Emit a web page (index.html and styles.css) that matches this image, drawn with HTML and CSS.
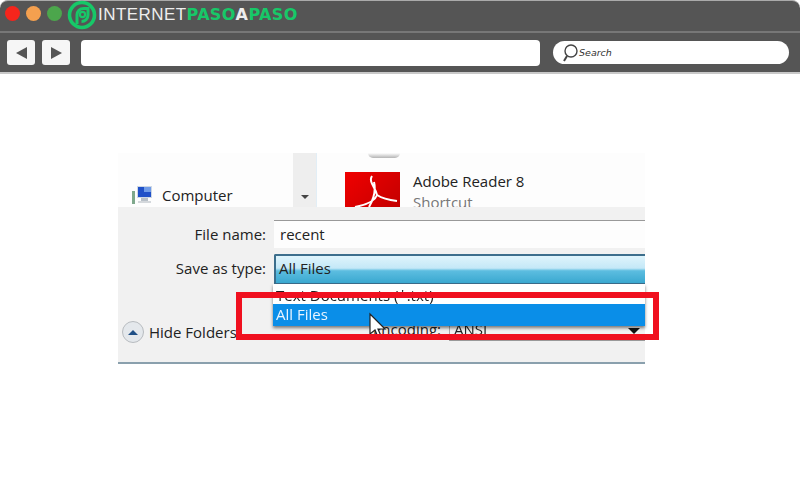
FILE: index.html
```html
<!DOCTYPE html>
<html lang="en">
<head>
  <meta charset="UTF-8">
  <meta name="viewport" content="width=device-width, initial-scale=1.0">
  <title>Internet Paso a Paso</title>
  <link rel="stylesheet" href="styles.css">
</head>
<body>
  <div class="browser">
    <div class="titlebar">
      <span class="light red"></span>
      <span class="light orange"></span>
      <span class="light green"></span>
      <svg class="logo-icon" width="30" height="30" viewBox="0 0 30 30">
        <circle cx="15" cy="15" r="12.5" fill="none" stroke="#17c868" stroke-width="3.6"/>
        <path d="M10 24 L10 15 A6.5 6.5 0 0 1 16.500 8.500 L21 8.500 L21 15 A6.500 6.500 0 0 1 14.500 21.500" fill="none" stroke="#17c868" stroke-width="3"/>
        <circle cx="15.500" cy="14.500" r="2.600" fill="none" stroke="#17c868" stroke-width="2.200"/>
      </svg>
      <div class="logo-text">INTERNET<span class="paso">PASO</span><span class="paso-a">A</span><span class="paso">PASO</span></div>
    </div>
    <div class="toolbar">
      <button class="nav"><span class="arrow-left"></span></button>
      <button class="nav"><span class="arrow-right"></span></button>
      <div class="address"></div>
      <div class="search">
        <svg width="18" height="20" viewBox="0 0 18 20">
          <circle cx="10" cy="8" r="6" fill="none" stroke="#444" stroke-width="1.400"/>
          <path d="M6 13 L3 18" stroke="#444" stroke-width="2"/>
        </svg>
        <span>Search</span>
      </div>
    </div>
  </div>

  <div class="dialog">
    <div class="files">
      <div class="nav-pane">
        <svg class="computer" width="22" height="22" viewBox="0 0 22 22">
          <rect x="1" y="7" width="3" height="13" fill="#7fa88c"/>
          <rect x="6" y="2" width="15" height="12" fill="#cfd8e4"/>
          <rect x="7" y="3" width="13" height="10" fill="#1f50c8"/>
          <rect x="13" y="3" width="7" height="5" fill="#6f9be8"/>
          <rect x="10" y="14" width="7" height="3" fill="#b8c0c8"/>
          <rect x="7" y="17" width="13" height="2" fill="#d4d8dc"/>
        </svg>
        <span>Computer</span>
      </div>
      <div class="scrollbar"><span class="scroll-arrow"></span></div>
      <div class="listing">
        <div class="prev-icon"></div>
        <div class="shortcut">
          <div class="pdf-icon">
            <svg width="55" height="35" viewBox="0 0 55 35">
              <path d="M27 4 C23 10 31 16 32 23 C30 29 20 33 10 35 M32 23 C38 27 44 28 52 29 M24 35 C28 28 31 18 29 10" fill="none" stroke="#fff" stroke-width="2"/>
            </svg>
          </div>
          <div class="shortcut-text">
            <div class="shortcut-name">Adobe Reader 8</div>
            <div class="shortcut-type">Shortcut</div>
          </div>
        </div>
      </div>
    </div>

    <div class="panel">
      <div class="form-row name-row">
        <label>File name:</label>
        <div class="name-input">recent</div>
      </div>
      <div class="form-row type-row">
        <label>Save as type:</label>
        <div class="type-select">All Files</div>
      </div>
      <div class="bottom-row">
        <div class="hide-folders">
          <span class="hide-btn"><span class="hide-arrow"></span></span>
          <span>Hide Folders</span>
        </div>
        <div class="encoding">
          <span class="encoding-label">Encoding:</span>
          <div class="encoding-select">ANSI<span class="select-arrow"></span></div>
        </div>
      </div>

      <div class="dropdown">
        <div class="option">Text Documents (*.txt)</div>
        <div class="option selected">All Files</div>
      </div>
    </div>
  </div>

  <svg class="cursor" width="20" height="28" viewBox="0 0 20 28">
    <path d="M2 2 L2 22 L7 18 L10 25 L13 24 L10 17 L17 17 Z" fill="#fff" stroke="#222" stroke-width="1.200"/>
  </svg>
  <div class="highlight"></div>
</body>
</html>
```

FILE: styles.css
```css
body {
  margin: 0;
  background: #fff;
  font-family: "Open Sans", "Noto Sans", sans-serif;
  color: #222;
  position: relative;
  height: 500px;
  overflow: hidden;
}

.browser {
  height: 74px;
  background: #555;
  border-top: 1px solid #aaa;
  border-bottom: 2px solid #c8c8c8;
  border-radius: 8px 8px 0 0;
  box-sizing: border-box;
}
.titlebar {
  height: 32px;
  box-sizing: border-box;
  display: flex;
  align-items: center;
  padding: 0 0 5px 5px;
  border-bottom: 2px solid #777;
}
.light {
  width: 15px;
  height: 15px;
  border-radius: 50%;
  margin-right: 6px;
}
.red { background: #f5251c; }
.orange { background: #f4a04f; }
.green { background: #4ca64c; }
.logo-icon {
  margin: 3px 0 0 -1px;
}
.logo-text {
  margin: 2px 0 0 1px;
  font-family: "Liberation Sans", sans-serif;
  font-size: 17px;
  letter-spacing: 0.45px;
  color: #eee;
  white-space: nowrap;
}
.paso {
  font-family: "DejaVu Sans", sans-serif;
  font-size: 16px;
  font-weight: bold;
  color: #17c868;
  letter-spacing: 0.300px;
}
.paso-a {
  font-family: "DejaVu Sans", sans-serif;
  font-size: 16px;
  font-weight: bold;
  letter-spacing: 0.600px;
  color: #eee;
}

.toolbar {
  display: flex;
  align-items: center;
  height: 39px;
  padding: 0 11px 0 7px;
}
.nav {
  width: 28px;
  height: 25px;
  padding: 0;
  margin-right: 7px;
  border: 0;
  border-radius: 3px;
  background: #f6f6f6;
  display: flex;
  align-items: center;
  justify-content: center;
}
.arrow-left {
  border-right: 11px solid #555;
  border-top: 6px solid transparent;
  border-bottom: 6px solid transparent;
}
.arrow-right {
  border-left: 11px solid #555;
  border-top: 6px solid transparent;
  border-bottom: 6px solid transparent;
}
.address {
  flex: none;
  width: 459px;
  height: 26px;
  margin-left: 4px;
  background: #fff;
  border-radius: 4px;
}
.search {
  flex: 1;
  height: 23px;
  margin-left: 13px;
  background: #fff;
  border-radius: 12px;
  display: flex;
  align-items: center;
  padding-left: 8px;
  font-family: "DejaVu Sans", sans-serif;
  font-style: italic;
  font-size: 9.500px;
  color: #333;
}

.dialog {
  width: 527px;
  margin: 79px 0 0 118px;
  filter: blur(0.4px);
}
.files {
  height: 54px;
  display: flex;
  background: #fdfdfd;
  overflow: hidden;
}
.nav-pane {
  width: 175px;
  display: flex;
  align-items: flex-end;
  box-sizing: border-box;
  padding: 0 0 0 13px;
  font-size: 15px;
}
.nav-pane span {
  margin: 0 0 1px 9px;
  line-height: 22px;
}
.computer {
  margin-bottom: 1px;
}
.scrollbar {
  width: 24px;
  background: #eee;
  border-right: 1px solid #e2eef6;
  display: flex;
  justify-content: center;
  align-items: flex-end;
  padding-bottom: 8px;
  box-sizing: border-box;
}
.scroll-arrow {
  border-top: 4px solid #444;
  border-left: 4px solid transparent;
  border-right: 4px solid transparent;
}
.listing {
  margin-left: 28px;
}
.prev-icon {
  width: 32px;
  height: 5px;
  margin-left: 23px;
  border-radius: 0 0 16px 16px;
  background: linear-gradient(#fff, #b4b4b4);
}
.shortcut {
  display: flex;
  padding-top: 14px;
}
.pdf-icon {
  width: 55px;
  height: 35px;
  background: linear-gradient(135deg, #f00000, #c40000);
}
.shortcut-text {
  margin-left: 13px;
  margin-top: -1px;
  font-size: 15px;
  line-height: 21px;
}
.shortcut-type {
  color: #777;
}

.panel {
  position: relative;
  height: 157px;
  box-sizing: border-box;
  background: #f1f1f1;
  border-bottom: 2px solid #8aa0ad;
  padding-top: 13px;
}
.form-row {
  display: flex;
  align-items: center;
  font-size: 15px;
}
.form-row label {
  width: 148px;
  margin-right: 8px;
  text-align: right;
}
.name-row {
  height: 28px;
}
.name-input {
  flex: 1;
  height: 28px;
  line-height: 26px;
  background: #fdfdfd;
  border-top: 1px solid #999;
  box-sizing: border-box;
  padding-left: 6px;
}
.type-row {
  height: 31px;
  margin-top: 6px;
}
.type-row label {
  margin-bottom: 3px;
}
.type-select {
  flex: 1;
  height: 31px;
  line-height: 25px;
  box-sizing: border-box;
  border: 1px solid #3c6e8c;
  border-right: 0;
  border-width: 2px 0 2px 2px;
  border-radius: 2px 0 0 2px;
  padding-left: 3px;
  background: linear-gradient(#dff4fc 0%, #c4e8f7 45%, #5cbde0 55%, #3aa8d0 100%);
}
.bottom-row {
  display: flex;
  height: 41px;
  margin-top: 34px;
  font-size: 15px;
}
.hide-folders {
  display: flex;
  align-items: center;
  width: 245px;
  height: 26px;
  padding-left: 4px;
  box-sizing: border-box;
}
.hide-btn {
  width: 22px;
  height: 22px;
  border-radius: 50%;
  background: #e4e8ec;
  border: 1px solid #b8bcc0;
  box-sizing: border-box;
  display: flex;
  align-items: center;
  justify-content: center;
  margin-right: 5px;
}
.hide-arrow {
  border-bottom: 5px solid #1f4f86;
  border-left: 5px solid transparent;
  border-right: 5px solid transparent;
}
.encoding {
  display: flex;
  align-items: flex-start;
  flex: 1;
}
.encoding-label {
  width: 78px;
  text-align: right;
  margin-right: 8px;
  line-height: 20px;
}
.encoding-select {
  flex: 1;
  height: 22px;
  line-height: 20px;
  box-sizing: border-box;
  border-bottom: 1px solid #999;
  border-left: 1px solid #aaa;
  padding-left: 4px;
  position: relative;
}
.select-arrow {
  position: absolute;
  right: 5px;
  top: 9px;
  border-top: 6px solid #111;
  border-left: 6px solid transparent;
  border-right: 6px solid transparent;
}

.dropdown {
  position: absolute;
  left: 155px;
  right: 0;
  top: 77px;
  height: 42px;
  background: #fff;
  box-shadow: 0 2px 3px rgba(0, 0, 0, 0.5);
  font-size: 15px;
}
.option {
  height: 20px;
  line-height: 22px;
  padding-left: 3px;
}
.selected {
  height: 22px;
  line-height: 20px;
  background: #0a8ee8;
  color: #e8f4ff;
}

.highlight {
  position: absolute;
  left: 236px;
  top: 292px;
  width: 423px;
  height: 48px;
  box-sizing: border-box;
  border: 6px solid #f0101f;
}
.cursor {
  position: absolute;
  left: 368px;
  top: 312px;
}
```
